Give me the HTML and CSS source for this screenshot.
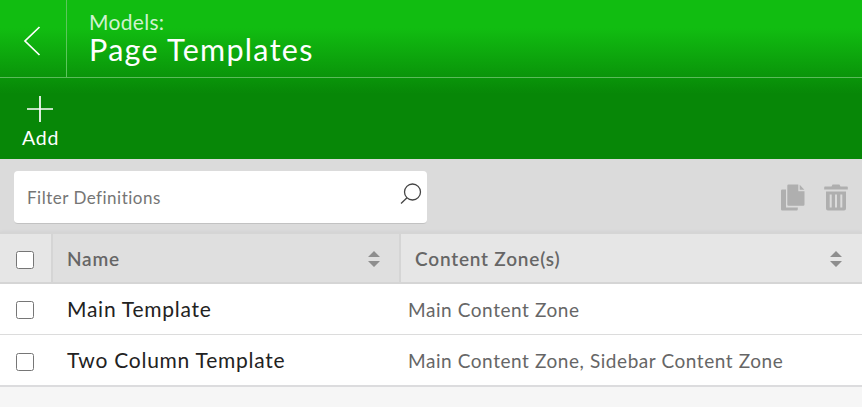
FILE: index.html
```html
<!DOCTYPE html>
<html lang="en">
<head>
    <meta charset="UTF-8">
    <meta name="viewport" content="width=device-width, initial-scale=1.0">
    <title>Page Templates</title>
    <link rel="stylesheet" href="styles.css">
</head>
<body>
    <header class="top">
        <div class="title-bar">
            <a class="back" href="#" aria-label="Back">
                <svg width="18" height="32" viewBox="0 0 18 32"><path d="M16.5 2 L2 16 L16.5 30"/></svg>
            </a>
            <div class="titles">
                <div class="section">Models:</div>
                <h1>Page Templates</h1>
            </div>
        </div>
        <div class="actions">
            <a class="action" href="#">
                <svg width="28" height="28" viewBox="0 0 28 28"><path d="M14 1v26M1 14h26"/></svg>
                <span>Add</span>
            </a>
        </div>
    </header>

    <div class="filter-bar">
        <div class="filter">
            <input type="text" placeholder="Filter Definitions">
            <svg width="22" height="22" viewBox="0 0 22 22"><circle cx="12.5" cy="9" r="8"/><path d="M7 14.8 L1 20.5"/></svg>
        </div>
        <div class="tools">
            <svg width="24" height="27" viewBox="0 0 24 27">
                <path d="M1.2 5.5H5V23.5H16.8V25.3Q16.8 26.5 15.6 26.5H1.2Q0 26.5 0 25.3V6.7Q0 5.5 1.2 5.5Z"/>
                <path d="M7.5 0.5H17.3V7.3H23.5V20.6Q23.5 21.8 22.3 21.8H7.5Q6.3 21.8 6.3 20.6V1.7Q6.3 0.5 7.5 0.5Z"/>
                <path d="M18.7 0.8L23.3 5.8H18.7Z"/>
            </svg>
            <svg width="24" height="27" viewBox="0 0 24 27">
                <path fill-rule="evenodd" d="M1 2.5H7.5L8.6 0.5H15.4L16.5 2.5H23Q23.8 2.5 23.8 3.3V5.5H0.2V3.3Q0.2 2.5 1 2.5ZM2 7.5H22V24.5Q22 26.5 20 26.5H4Q2 26.5 2 24.5ZM5.7 10.5V23.5H7.7V10.5ZM11 10.5V23.5H13V10.5ZM16.3 10.5V23.5H18.3V10.5Z"/>
            </svg>
        </div>
    </div>

    <div class="grid">
        <div class="row head">
            <div class="cell check"><input type="checkbox"></div>
            <div class="cell name">
                <span>Name</span>
                <svg width="12" height="16" viewBox="0 0 12 16"><path d="M6 0L12 6H0ZM0 10H12L6 16Z"/></svg>
            </div>
            <div class="cell zones">
                <span>Content Zone(s)</span>
                <svg width="12" height="16" viewBox="0 0 12 16"><path d="M6 0L12 6H0ZM0 10H12L6 16Z"/></svg>
            </div>
        </div>
        <div class="row">
            <div class="cell check"><input type="checkbox"></div>
            <div class="cell name"><span>Main Template</span></div>
            <div class="cell zones"><span>Main Content Zone</span></div>
        </div>
        <div class="row">
            <div class="cell check"><input type="checkbox"></div>
            <div class="cell name"><span>Two Column Template</span></div>
            <div class="cell zones"><span>Main Content Zone, Sidebar Content Zone</span></div>
        </div>
    </div>
</body>
</html>
```
FILE: styles.css
```css
* {
    margin: 0;
    padding: 0;
    box-sizing: border-box;
}

body {
    background-color: #f6f6f6;
    color: #222;
    font-family: Muli, Lato, "Open Sans", sans-serif;
    overflow: hidden;
}

a {
    color: #fff;
    text-decoration: none;
}

svg {
    display: block;
    flex: none;
}

.top {
    height: 159px;
    background: linear-gradient(#11bd11 0, #11bd11 28px, #078707 94px);
    color: #fff;
}

.top svg {
    fill: none;
    stroke: #fff;
    stroke-width: 1.7;
}

.title-bar {
    display: flex;
    height: 78px;
    border-bottom: 1px solid #5abb5a;
}

.back {
    display: flex;
    align-items: center;
    width: 67px;
    padding: 4px 0 0 23px;
    border-right: 1px solid #5cc65c;
}

.titles {
    padding: 9px 0 0 22px;
}

.section {
    font-size: 21px;
    line-height: 25px;
    letter-spacing: 0.3px;
    color: #d0f2d0;
}

h1 {
    font-size: 30.5px;
    font-weight: normal;
    line-height: 31px;
    letter-spacing: 1.3px;
}

.actions {
    padding: 17px 0 0 22px;
}

.action {
    display: inline-flex;
    flex-direction: column;
    align-items: flex-start;
    font-size: 19.5px;
    line-height: 24px;
    letter-spacing: 0.8px;
}

.action svg {
    margin-left: 4px;
}

.action span {
    margin-top: 3px;
}

.filter-bar {
    display: flex;
    justify-content: space-between;
    height: 73px;
    padding: 12px 14px 8px;
    background-color: #dbdbdb;
}

.filter {
    display: flex;
    width: 413px;
    height: 53px;
    padding: 0 5px 0 13px;
    background-color: #fff;
    border-bottom: 1px solid #c2c2c2;
    border-radius: 4px;
}

.filter input {
    flex: 1;
    border: 0;
    outline: 0;
    background: none;
    font: 17px Muli, Lato, "Open Sans", sans-serif;
    letter-spacing: 0.5px;
    padding-top: 1px;
}

.filter input::placeholder {
    color: #757575;
}

.filter svg {
    margin-top: 12px;
    fill: none;
    stroke: #444;
    stroke-width: 1.3;
}

.tools {
    display: flex;
    gap: 19px;
    padding-top: 13px;
}

.tools svg {
    fill: #afafaf;
}

.grid {
    box-shadow: 0 2px 4px rgba(60, 60, 90, 0.25);
}

.row {
    display: flex;
    height: 51px;
    background-color: #fff;
    border-bottom: 1px solid #dcdcdc;
}

.row:last-child {
    height: 52px;
    border-bottom: 2px solid #dcdcde;
}

.cell {
    display: flex;
    align-items: center;
    justify-content: space-between;
}

.check {
    width: 51px;
    padding-left: 16px;
}

.check input {
    width: 18px;
    height: 18px;
    margin-top: 2px;
}

.row:last-child .check input {
    margin-top: 4px;
}

.name {
    width: 348px;
    padding: 0 0 2px 16px;
    font-size: 21px;
    letter-spacing: 0.75px;
}

.zones {
    flex: 1;
    padding-left: 9px;
    font-size: 19px;
    letter-spacing: 0.57px;
    color: #666;
}

.head {
    height: 52px;
    border-top: 2px solid #d5d5d5;
    border-bottom: 2px solid #d5d5d5;
    background-color: #e6e6e6;
}

.head .check input {
    margin-top: 4px;
}

.head .name,
.head .zones {
    padding: 2px 20px 0 14px;
    border-left: 2px solid #d5d5d5;
    font-size: 19px;
    font-weight: 600;
    letter-spacing: 0.8px;
    color: #666;
}

.head .name {
    padding-right: 19px;
    background-color: #dfdfdf;
}

.head span {
    margin-top: -2px;
}

.head svg {
    fill: #8e8e8e;
}
```
